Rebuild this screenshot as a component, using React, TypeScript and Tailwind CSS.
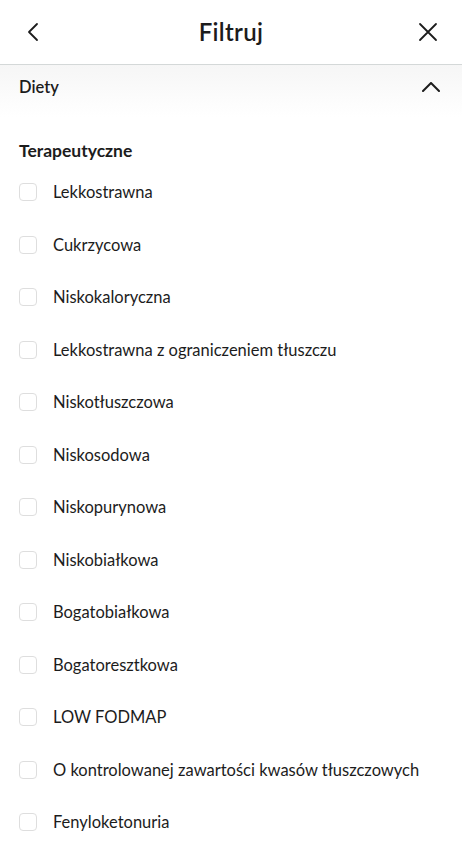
import React, { useState } from 'react';

const DIETS = [
  'Lekkostrawna',
  'Cukrzycowa',
  'Niskokaloryczna',
  'Lekkostrawna z ograniczeniem tłuszczu',
  'Niskotłuszczowa',
  'Niskosodowa',
  'Niskopurynowa',
  'Niskobiałkowa',
  'Bogatobiałkowa',
  'Bogatoresztkowa',
  'LOW FODMAP',
  'O kontrolowanej zawartości kwasów tłuszczowych',
  'Fenyloketonuria',
];

const App = () => {
  const [checked, setChecked] = useState<string[]>([]);

  const toggle = (name: string) => {
    setChecked((prev) => (prev.includes(name) ? prev.filter((x) => x !== name) : [...prev, name]));
  };

  return (
    <div className="w-[462px] h-[846px] overflow-hidden bg-white text-[#1c1c1c] font-['Lato',sans-serif]">
      {/* Header */}
      <div className="h-[65px] flex items-center justify-between px-[24px] border-b border-[#d4d8d8]">
        <button className="w-[20px] h-[20px] flex items-center justify-center">
          <svg width="20" height="20" viewBox="0 0 20 20" fill="none" stroke="#1c1c1c" strokeWidth="1.8" strokeLinecap="round" strokeLinejoin="round">
            <path d="M13 2 L5 10 L13 18" />
          </svg>
        </button>
        <h1 className="text-[24px] font-semibold tracking-[0.3px]">Filtruj</h1>
        <button className="w-[20px] h-[20px] flex items-center justify-center">
          <svg width="20" height="20" viewBox="0 0 20 20" fill="none" stroke="#1c1c1c" strokeWidth="1.8" strokeLinecap="round">
            <path d="M2 2 L18 18 M18 2 L2 18" />
          </svg>
        </button>
      </div>

      {/* Section header */}
      <div className="bg-gradient-to-b from-[#f6f6f6] to-white h-[52px] flex items-start justify-between pl-[19px] pr-[22px] pt-[10px]">
        <span className="text-[16.5px] font-semibold">Diety</span>
        <svg className="mt-[7px]" width="18" height="10" viewBox="0 0 18 10" fill="none" stroke="#1c1c1c" strokeWidth="2" strokeLinecap="round" strokeLinejoin="round">
          <path d="M1 9 L9 1 L17 9" />
        </svg>
      </div>

      <div className="pl-[19px] pt-[22px]">
        <h2 className="text-[17.5px] font-bold leading-[24px]">Terapeutyczne</h2>
        <ul className="mt-[3px]">
          {DIETS.map((name) => (
            <li key={name} className="h-[52.5px] flex items-center gap-[16px] cursor-pointer" onClick={() => toggle(name)}>
              <span
                className={
                  checked.includes(name)
                    ? 'w-[18px] h-[18px] rounded-[4px] border border-[#1c1c1c] bg-[#1c1c1c]'
                    : 'w-[18px] h-[18px] rounded-[4px] border border-[#dedede] bg-white'
                }
              />
              <span className="text-[16.5px] leading-[20px]">{name}</span>
            </li>
          ))}
        </ul>
      </div>
    </div>
  );
};

export default App;
